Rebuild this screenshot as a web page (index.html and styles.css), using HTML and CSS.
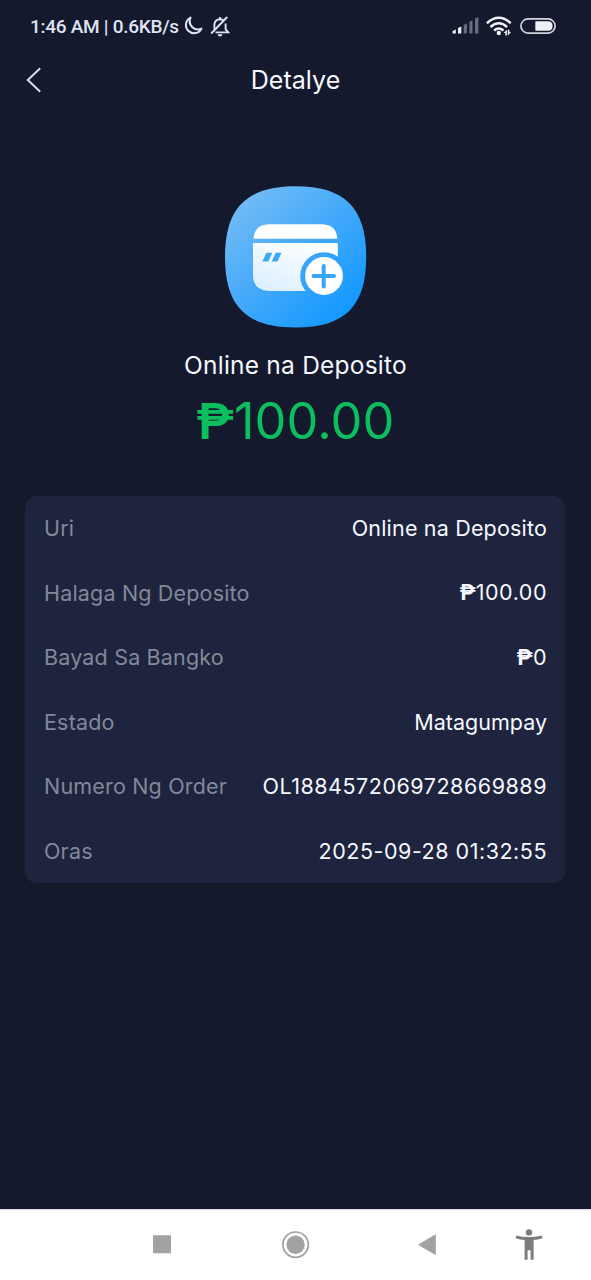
FILE: index.html
```html
<!DOCTYPE html>
<html lang="fil">
<head>
<meta charset="utf-8">
<title>Detalye</title>
<link rel="stylesheet" href="styles.css">
</head>
<body>
<div class="screen">
  <div class="status">
    <span class="status-text">1:46 AM | 0.6KB/s</span>
    <svg class="moon" width="20" height="20" viewBox="0 0 20 20"><path d="M7.6 1.6A8.2 8.2 0 1 0 18.5 12.6A8.2 8.2 0 0 1 7.6 1.6Z" fill="none" stroke="#dfe3f2" stroke-width="2" stroke-linejoin="round"/></svg>
    <svg class="bell" width="20" height="21" viewBox="0 0 20 21"><g fill="none" stroke="#dfe3f2" stroke-width="1.9"><path d="M4.4 13.5V8.6Q4.8 3.4 10 3.2Q12 3.2 13.4 4.2M15.6 7.5V13.2L18.2 16.4H5.5M10 3.2V1"/><path d="M1.2 17.5L17.2 1"/></g><path d="M7.5 18.3H12.5Q12 20.5 10 20.5T7.5 18.3Z" fill="#dfe3f2"/></svg>
    <span class="grow"></span>
    <svg class="signal" width="27" height="18" viewBox="0 0 27 18"><path d="M.6 16.5V14L3.8 12.6V16.5ZM6 16.5V11L9.3 9.5V16.5Z" fill="#eef0f8"/><path d="M11.7 16.5V8L14.9 6.5V16.5ZM17.4 16.5V4.8L20.5 3.2V16.5ZM23 16.5V1.5L26.4 0V16.5Z" fill="#686d80"/></svg>
    <svg class="wifi" width="26" height="20" viewBox="0 0 26 20"><g fill="none" stroke="#eef0f8" stroke-width="2.5"><path d="M.9 7.2Q12.8-3.6 24.7 7.2"/><path d="M4.5 11Q12.8 3.5 21.1 11"/><path d="M8.1 14.5Q12.8 10.4 17.5 14.5"/></g><circle cx="12.8" cy="17" r="2.2" fill="#eef0f8"/><path d="M17.6 16.9L20.9 13.8V19.4H19.3V16.9ZM21.8 13.8H23.4V16.3H25.2L21.8 19.4Z" fill="#eef0f8"/></svg>
    <svg class="battery" width="36" height="16" viewBox="0 0 36 16"><rect x=".9" y=".9" width="34.2" height="14.2" rx="7.1" fill="none" stroke="#d0d4df" stroke-width="1.7"/><path d="M16 3.3H28Q32.6 3.3 32.6 8T28 12.7H16Q15.3 12.7 15.3 12V4Q15.3 3.3 16 3.3Z" fill="#eef0f5"/></svg>
  </div>
  <header class="header">
    <svg class="back" width="16" height="26" viewBox="0 0 16 26"><path d="M14.2 1.2L1.8 13L14.2 24.8" fill="none" stroke="#d8dbe6" stroke-width="2"/></svg>
    <h1 class="title">Detalye</h1>
  </header>
  <section class="summary">
    <svg class="logo" width="142" height="142" viewBox="0 0 142 142">
      <defs>
        <linearGradient id="tile" x1="0.05" y1="0.05" x2="0.85" y2="0.9"><stop offset="0" stop-color="#79bef5"/><stop offset=".55" stop-color="#41a8fa"/><stop offset="1" stop-color="#1499ff"/></linearGradient>
        <linearGradient id="card" x1=".8" y1="0" x2=".2" y2="1"><stop offset="0" stop-color="#fff"/><stop offset="1" stop-color="#dcefff"/></linearGradient>
        <mask id="cutout"><path d="M0 0H142V142H0Z" fill="#fff"/><circle cx="99" cy="90" r="23.8" fill="#000"/></mask>
      </defs>
      <path d="M70.5 .3C120 .3 141.2 22 141.2 71S120 141.5 70.5 141.5S0 120 0 71S21.5 .3 70.5 .3Z" fill="url(#tile)"/>
      <path d="M28.5 52.8Q29.5 38.3 44.5 38.3H96.5Q111.5 38.3 112.3 52.8Z" fill="#fff"/>
      <path d="M28 57H112.8V105H44Q28 104.5 28 89Z" fill="url(#card)" mask="url(#cutout)"/>
      <path d="M41.4 66.7H47.2L43.4 75.6H37.4ZM50.7 66.7H56.4L52.6 75.6H46.8Z" fill="#3ea8f3"/>
      <circle cx="99" cy="90" r="18.9" fill="#fff"/>
      <path d="M98.7 80V100.4M88.5 90H109" fill="none" stroke="#38a4f8" stroke-width="4" stroke-linecap="round"/>
    </svg>
    <div class="kind">Online na Deposito</div>
    <div class="amount"><span class="peso">₱</span>100.00</div>
  </section>
  <dl class="details">
    <div class="row"><dt>Uri</dt><dd>Online na Deposito</dd></div>
    <div class="row"><dt>Halaga Ng Deposito</dt><dd class="digits"><span class="peso">₱</span>100.00</dd></div>
    <div class="row"><dt>Bayad Sa Bangko</dt><dd class="digits"><span class="peso">₱</span>0</dd></div>
    <div class="row"><dt>Estado</dt><dd class="state">Matagumpay</dd></div>
    <div class="row"><dt>Numero Ng Order</dt><dd class="digits">OL1884572069728669889</dd></div>
    <div class="row"><dt>Oras</dt><dd class="digits">2025-09-28 01:32:55</dd></div>
  </dl>
  <nav class="nav">
    <svg class="nav-icons" width="591" height="71" viewBox="0 0 591 71">
      <rect x="153" y="26.3" width="18" height="18" rx=".8" fill="#a2a2a2"/>
      <circle cx="295.6" cy="35.7" r="12.7" fill="none" stroke="#a0a0a0" stroke-width="1.7"/>
      <circle cx="295.6" cy="35.7" r="9.2" fill="#a2a2a2"/>
      <path d="M418.8 35.7L435.3 26V45.4Z" fill="#a2a2a2" stroke="#a2a2a2" stroke-linejoin="round"/>
      <g fill="#7c7c7c"><circle cx="529" cy="23.4" r="3.2"/><path d="M516 26.5Q529 29.7 542 26.5L542.4 29.2Q538 30.6 533.6 31V50.7H530.6V41.3H527.6V50.7H524.6V31Q520 30.6 515.8 29.2Z"/></g>
    </svg>
  </nav>
</div>
</body>
</html>
```

FILE: styles.css
```css
* { box-sizing: border-box; }
body { margin: 0; background: #14192d; font-family: Inter, "Liberation Sans", sans-serif; color: #f6f8ff; }
.screen { width: 591px; height: 1280px; display: flex; flex-direction: column; }
.status { height: 52px; padding: 0 35px 0 30px; display: flex; align-items: center; flex: none; }
.status-text { font: 500 19px/24px Roboto, sans-serif; letter-spacing: -.28px; color: #dfe3f2; white-space: nowrap; padding-top: 2px; }
.moon { margin-left: 4px; }
.bell { margin-left: 7px; }
.grow { flex: 1; }
.wifi { margin-left: 7px; }
.battery { margin-left: 8px; }
.header { height: 56px; flex: none; display: grid; grid-template-columns: 1fr auto 1fr; align-items: center; padding-left: 26px; padding-right: 26px; }
.title { margin: 0; font-size: 25px; line-height: 32px; font-weight: 400; letter-spacing: .05px; }
.summary { height: 388px; flex: none; display: flex; flex-direction: column; align-items: center; padding-top: 78px; }
.logo { flex: none; }
.kind { margin-top: 21px; font-size: 24.5px; line-height: 32px; letter-spacing: .22px; }
.amount { margin-top: 9px; font-size: 50.5px; line-height: 62px; letter-spacing: .1px; color: #0bbf5f; }
.peso { font-family: Roboto, sans-serif; font-weight: 700; letter-spacing: 0; }
.amount .peso { font-weight: 600; }
.details { margin: 0 26px 0 25px; padding: 0 18px 0 19px; height: 387px; flex: none; background: #1e243e; border-radius: 12px; display: grid; grid-template-rows: repeat(6, 1fr); }
.row { display: flex; align-items: center; justify-content: space-between; font-size: 21.5px; line-height: 30px; letter-spacing: .18px; white-space: nowrap; }
.row dt { color: #838899; }
.row dd { margin: 0; }
.row .digits { letter-spacing: .52px; }
.row .digits .peso { letter-spacing: 0; }
.row .state { letter-spacing: 0; }
.nav { margin-top: auto; height: 71px; flex: none; background: #fff; border-top: 1px solid #dcddea; }
.nav-icons { display: block; margin-top: -1px; }
```
